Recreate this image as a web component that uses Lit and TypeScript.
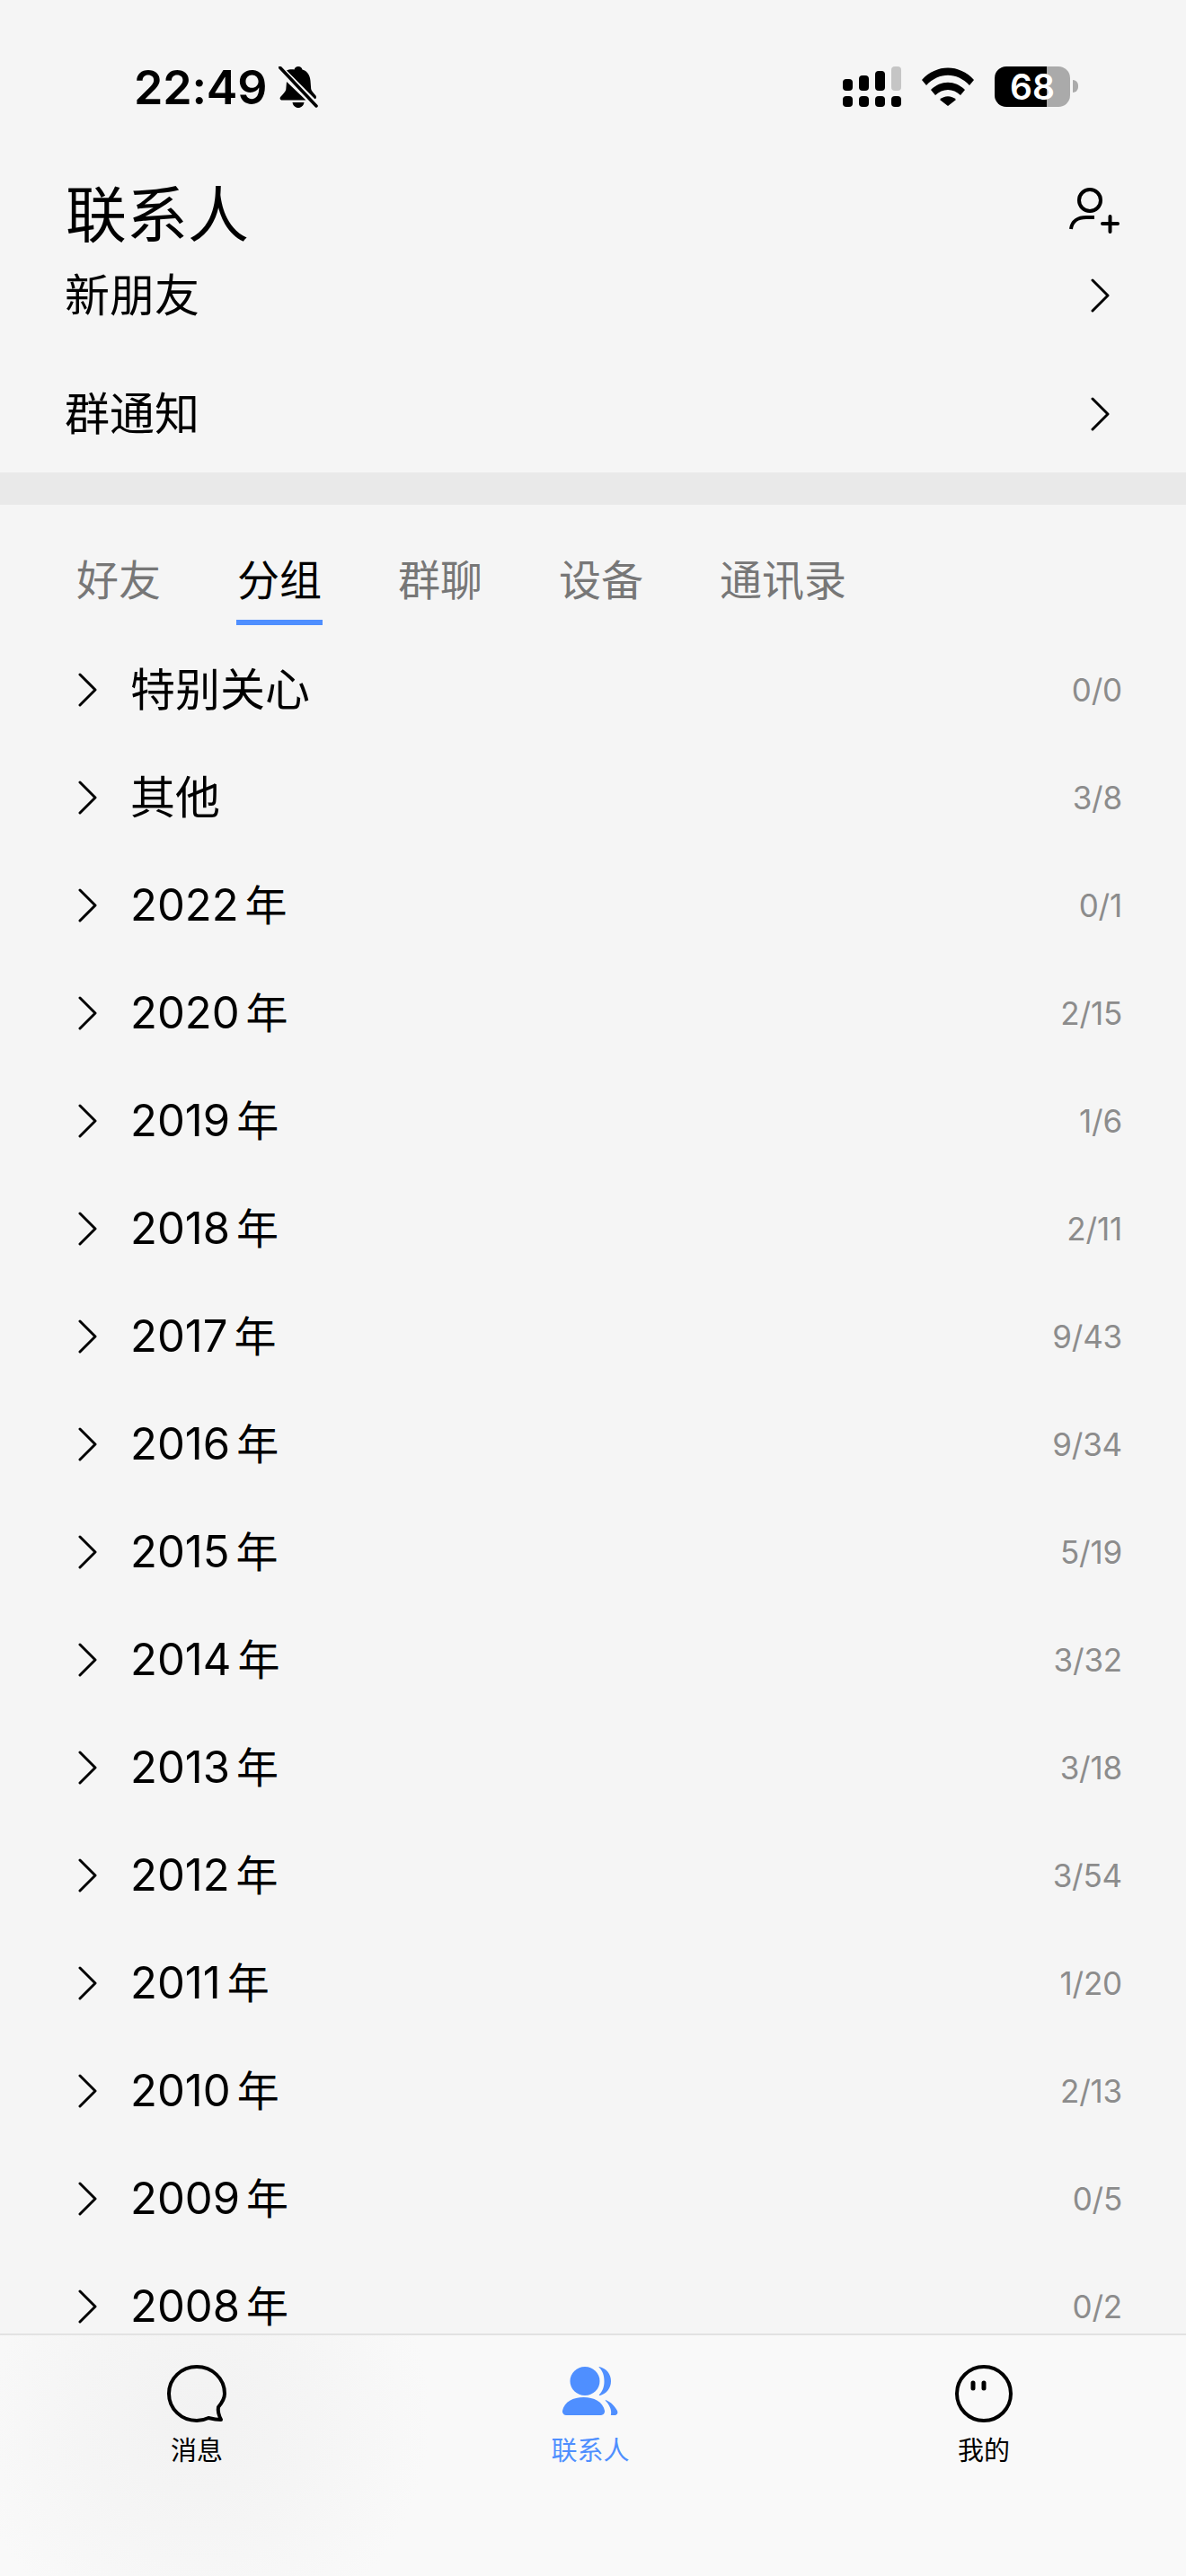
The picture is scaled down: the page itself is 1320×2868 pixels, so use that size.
import { LitElement, html, css } from "lit";
import { customElement } from "lit/decorators.js";

const GROUPS: [string, string][] = [
  ["2022", "0/1"], ["2020", "2/15"], ["2019", "1/6"], ["2018", "2/11"], ["2017", "9/43"],
  ["2016", "9/34"], ["2015", "5/19"], ["2014", "3/32"], ["2013", "3/18"], ["2012", "3/54"],
  ["2011", "1/20"], ["2010", "2/13"], ["2009", "0/5"], ["2008", "0/2"],
];

const chevron = html`<svg class="chev" width="22" height="38" viewBox="0 0 22 38" fill="none" stroke="#000" stroke-width="3" stroke-linecap="round" stroke-linejoin="round"><path d="M2 2 L19 19 L2 36"/></svg>`;

@customElement("app-root")
export class AppRoot extends LitElement {
  static styles = css`
    :host {
      display: flex; flex-direction: column; width: 1320px; height: 2868px; overflow: hidden;
      background: #f5f5f5; color: #000;
      font-family: Inter, "Noto Sans CJK SC", sans-serif;
    }
    .status { height: 170px; flex: none; display: flex; align-items: flex-start; padding: 72px 120px 0 149px; box-sizing: border-box; }
    .time { font-size: 52px; font-weight: 600; line-height: 52px; letter-spacing: -0.2px; }
    .bell { margin: 2px 0 0 13px; }
    .spacer { flex: 1; }
    .signal { margin: 2px 0 0 0; }
    .wifi { margin: 3px 0 0 22px; }
    .battery { margin: 2px 0 0 23px; position: relative; width: 93px; height: 45px; display: flex; }
    .batt-shape { width: 85px; height: 45px; border-radius: 13px; background: linear-gradient(90deg, #000 0 58px, #aaa 58px); display: flex; align-items: center; justify-content: center; color: #fff; font-size: 39px; font-weight: 600; line-height: 45px; }
    .nub { width: 6px; height: 14px; margin: 15px 0 0 3px; background: #aaa; border-radius: 0 7px 7px 0; }
    .title-row { flex: none; height: 90px; padding: 0 74px 0 73px; display: flex; align-items: center; justify-content: space-between; margin-top: 24px; }
    .title-row svg { margin-bottom: 6px; }
    h1 { margin: 0; font-size: 68px; font-weight: 400; line-height: 90px; }
    .nav { flex: none; height: 132px; padding: 0 84px 0 72px; display: flex; align-items: center; justify-content: space-between; font-size: 50px; line-height: 60px; }
    .nav-first { margin-top: -21px; }
    .gap { flex: none; height: 36px; background: #e9e9e9; margin-top: -1px; }
    .tabs { flex: none; display: flex; gap: 83px; padding: 51px 0 0 84px; height: 95px; font-size: 47px; color: #777; }
    .tab { position: relative; height: 88px; line-height: 66px; box-sizing: border-box; padding: 0 1px; }
    .tab.on { color: #000; }
    .tab.on::after { content: ""; position: absolute; left: 0; right: 0; top: 77px; height: 6px; background: #4f8fff; }
    .list { flex: 1; min-height: 0; overflow: hidden; }
    .row { height: 120px; display: flex; align-items: center; padding: 0 71px 0 87px; box-sizing: border-box; }
    .row .chev { flex: none; }
    .name { margin-left: 36px; font-size: 50px; line-height: 60px; flex: 1; display: flex; align-items: center; }
    .digits { font-size: 49px; }
    .yr { margin-left: 7px; font-size: 47px; }
    .count { font-size: 35px; color: #8c8c8c; letter-spacing: -0.2px; }
    .bar {
      flex: none; height: 270px; box-sizing: border-box; border-top: 2px solid #e2e2e2;
      background: radial-gradient(circle 260px at 219px 90px, #f2f2f2 0, #f5f5f5 50%, rgba(249,249,249,0) 100%), #f9f9f9;
      display: grid; grid-template-columns: 438px 438px 438px; padding-top: 32px;
    }
    .item { display: flex; flex-direction: column; align-items: center; font-size: 29px; line-height: 40px; }
    .item svg { display: block; margin-bottom: 11px; }
    .item.on { color: #4f8fff; }
  `;

  private renderRow(name: unknown, count: string) {
    return html`<div class="row">${chevron}<div class="name">${name}</div><div class="count">${count}</div></div>`;
  }

  render() {
    return html`
      <div class="status">
        <div class="time">22:49</div>
        <svg class="bell" width="44" height="46" viewBox="0 0 44 46">
          <path d="M22 0c2.400 0 4 1.500 4.500 3.500 6 1.800 8.500 6.500 9 12.500l.7 9c.3 2.500 3 4.500 5.300 7.500 1 1.500.5 3.500-1 3.800L9 4.500C11 3.500 14 3 17.500 3.500 18 1.500 19.600 0 22 0zM3 33c2.500-3 5-5 5.300-7.500l.7-8.500 21.500 20.500H4c-2.500 0-3.300-2.500-1-4.500zM15.500 40h13c-.5 3.500-3.300 6-6.500 6s-6-2.500-6.500-6z" fill="#000"/>
          <path d="M1 1.500 L42 44" stroke="#f5f5f5" stroke-width="7"/>
          <path d="M1.500 1 L42 44" stroke="#000" stroke-width="3.500" stroke-linecap="round"/>
        </svg>
        <div class="spacer"></div>
        <svg class="signal" width="66" height="46" viewBox="0 0 66 46">
          <rect x="0" y="14" width="11" height="13" rx="4"/><rect x="18" y="10" width="11" height="17" rx="4"/><rect x="36" y="5" width="11" height="22" rx="4"/><rect x="54" y="0" width="11" height="27" rx="4" fill="#c5c5c5"/>
          <rect x="0" y="33" width="11" height="12" rx="4"/><rect x="18" y="33" width="11" height="12" rx="4"/><rect x="36" y="33" width="11" height="12" rx="4"/><rect x="54" y="33" width="11" height="12" rx="4"/>
        </svg>
        <svg class="wifi" width="58" height="43" viewBox="0 0 58 43">
          <path d="M0 14C16-4 42-4 58 14l-5 6C39 5 19 5 5 20z"/>
          <path d="M10 25c11-11 27-11 38 0l-5 6c-8-8-20-8-28 0z"/>
          <path d="M20 36c5-5 13-5 18 0l-9 7z"/>
        </svg>
        <div class="battery"><div class="batt-shape">68</div><div class="nub"></div></div>
      </div>

      <div class="title-row">
        <h1>联系人</h1>
        <svg width="56" height="56" viewBox="0 0 56 56" fill="none" stroke="#000" stroke-width="4" stroke-linecap="round">
          <circle cx="23" cy="15" r="12"/>
          <path d="M2 47c1-9 8-13 17-13h9" stroke-linecap="butt"/>
          <path d="M37 41h17M45.500 33v17"/>
        </svg>
      </div>
      <div class="nav nav-first"><span>新朋友</span>${chevron}</div>
      <div class="nav"><span>群通知</span>${chevron}</div>
      <div class="gap"></div>

      <div class="tabs">
        <div class="tab">好友</div><div class="tab on">分组</div><div class="tab">群聊</div><div class="tab">设备</div><div class="tab">通讯录</div>
      </div>

      <div class="list">
        ${this.renderRow("特别关心", "0/0")}
        ${this.renderRow("其他", "3/8")}
        ${GROUPS.map(([y, c]) => this.renderRow(html`<span class="digits">${y}</span><span class="yr">年</span>`, c))}
      </div>

      <div class="bar">
        <div class="item">
          <svg width="70" height="66" viewBox="0 0 70 66" fill="none" stroke="#000" stroke-width="4" stroke-linejoin="round">
            <path d="M59 48 C64 42 66 37 66 33 C66 16 52 3 35 3 C18 3 4 16 4 33 C4 50 18 63 35 63 C40 63 44 62 48 60 C52 61 58 62 62 62 C60 58 58 53 59 48 Z"/>
          </svg>
          <span>消息</span>
        </div>
        <div class="item on">
          <svg width="62" height="66" viewBox="0 0 62 66" fill="#4f8fff">
            <ellipse cx="25" cy="19" rx="16.500" ry="16"/>
            <path d="M0 52C2 42 12 37 23.500 37S45 42 47 52c.5 2.500-1.500 5-4 5H4c-2.500 0-4.500-2.500-4-5z"/>
            <path d="M41 3c8 2 13 8 13 16s-5 14-12 16c-1 0-1.500-.5-1-1 4-4 5.500-9 5.500-15S45 8 41 4c-.5-.5-.5-1 0-1z"/>
            <path d="M48 40c6 2 11 8 13 12 1 2.500 0 5-3 5h-3c-1 0-1.500-.5-1-1 1-5-2-11-6-15-.5-1 0-1.500 0-1z"/>
          </svg>
          <span>联系人</span>
        </div>
        <div class="item">
          <svg width="68" height="66" viewBox="0 0 68 66" fill="none" stroke="#000" stroke-width="4">
            <circle cx="34" cy="33" r="30"/>
            <path d="M22 21v6M34 21v6" stroke-width="5" stroke-linecap="round"/>
          </svg>
          <span>我的</span>
        </div>
      </div>
    `;
  }
}
